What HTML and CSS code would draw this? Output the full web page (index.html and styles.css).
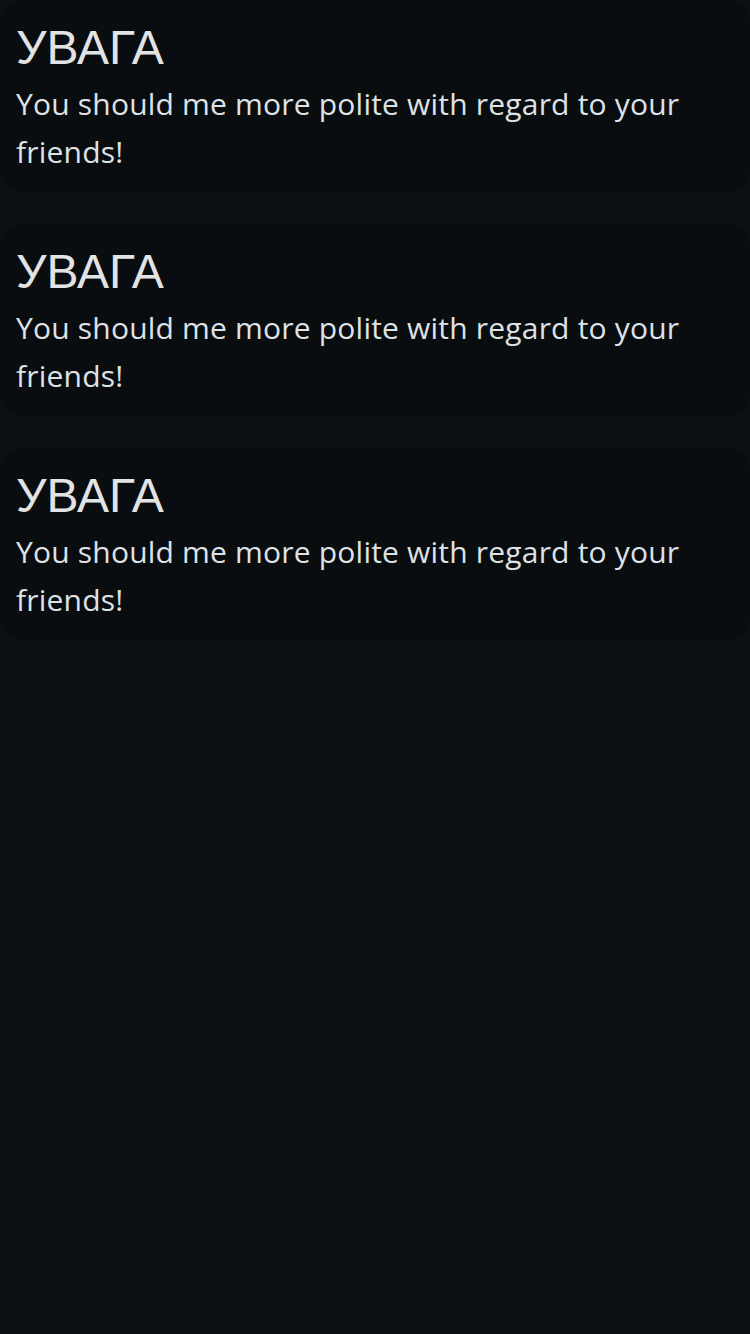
FILE: index.html
```html
<!DOCTYPE html>
<html lang="uk">
<head>
<meta charset="utf-8">
<meta name="viewport" content="width=750">
<title>Alerts</title>
<link rel="stylesheet" href="styles.css">
</head>
<body>
<main class="list">
  <section class="card">
    <h2 class="card-title">УВАГА</h2>
    <p class="card-text">You should me more polite with regard to your friends!</p>
  </section>
  <section class="card">
    <h2 class="card-title">УВАГА</h2>
    <p class="card-text">You should me more polite with regard to your friends!</p>
  </section>
  <section class="card">
    <h2 class="card-title">УВАГА</h2>
    <p class="card-text">You should me more polite with regard to your friends!</p>
  </section>
</main>
</body>
</html>
```

FILE: styles.css
```css
html, body {
  margin: 0;
  padding: 0;
  background: #0c1014;
  min-height: 100%;
}
body {
  width: 750px;
  min-height: 1334px;
}
.list {
  display: flex;
  flex-direction: column;
  gap: 32px;
}
.card {
  background: #090d10;
  border-radius: 24px;
  padding: 16px;
  display: flex;
  flex-direction: column;
}
.card-title {
  margin: 0;
  font-family: "Liberation Sans", Arial, sans-serif;
  font-weight: 400;
  font-size: 48px;
  line-height: 64px;
  color: #e1e3e5;
}
.card-text {
  margin: 0;
  font-family: "Open Sans", "Noto Sans", sans-serif;
  font-size: 30px;
  letter-spacing: 0.2px;
  line-height: 48px;
  color: #dfe2e5;
}
```
